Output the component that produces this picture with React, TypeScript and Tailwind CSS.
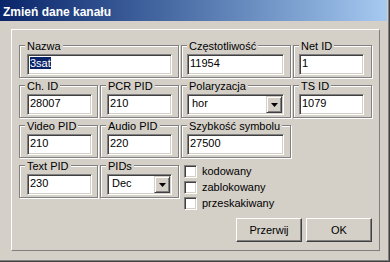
import type { ReactNode } from 'react';

const sunken =
  'border border-t-[#808080] border-l-[#808080] border-b-white border-r-white shadow-[inset_1px_1px_0_#404040,inset_-1px_-1px_0_#D4D0C8]';
const raised =
  'border border-t-[#D4D0C8] border-l-[#D4D0C8] border-b-[#404040] border-r-[#404040] shadow-[inset_1px_1px_0_#fff,inset_-1px_-1px_0_#808080] bg-[#D4D0C8]';

function Group({ label, className = '', children }: { label: string; className?: string; children?: ReactNode }) {
  return (
    <div
      className={`relative h-[33px] border border-[#808080] shadow-[inset_1px_1px_0_#fff,1px_1px_0_#fff] pt-[8px] ${className}`}
    >
      <span className="absolute left-[5px] top-[-6px] bg-[#D4D0C8] px-[2px] leading-[13px] whitespace-nowrap">
        {label}
      </span>
      {children}
    </div>
  );
}

function Field({ value, w = 'w-[65px]', selected }: { value: string; w?: string; selected?: boolean }) {
  return (
    <div className={`h-[21px] ${w} bg-white ${sunken} pl-[2px] pt-[2px] leading-[13px]`}>
      {selected ? <span className="bg-[#0A246A] text-white">{value}</span> : value}
    </div>
  );
}

function Combo({ value, w }: { value: string; w: string }) {
  return (
    <div className={`flex h-[21px] ${w} bg-white ${sunken} p-[1px]`}>
      <span className="flex-1 pl-[3px] pt-[1px] leading-[13px]">{value}</span>
      <div className={`flex h-[17px] w-[16px] items-center justify-center ${raised}`}>
        <svg width="7" height="4" viewBox="0 0 7 4">
          <polygon points="0,0 7,0 3.5,4" fill="#000" />
        </svg>
      </div>
    </div>
  );
}

function Check({ label }: { label: string }) {
  return (
    <div className="flex h-[16px] items-start gap-[5px]">
      <div className={`h-[13px] w-[13px] shrink-0 bg-white ${sunken}`} />
      <span className="leading-[13px]">{label}</span>
    </div>
  );
}

function Button({ label }: { label: string }) {
  return (
    <div
      className="flex h-[24px] w-[66px] items-center justify-center border border-t-white border-l-white border-b-[#404040] border-r-[#404040] shadow-[inset_-1px_-1px_0_#808080] leading-[13px]"
    >
      {label}
    </div>
  );
}

export default function App() {
  return (
    <div className="h-[262px] w-[390px] overflow-hidden border-r border-b border-[#404040] bg-[#D4D0C8] font-['Liberation_Sans',Arial,sans-serif] text-[11px] text-black">
      <div className="flex h-full flex-col border-r border-b border-[#808080]">
        <div className="mr-[1px] h-[21px] shrink-0 bg-linear-to-r from-[#0A246A] to-[#A6CAF0] pl-[3px] pt-[5px] text-[12px] font-bold leading-[14px] text-white">
          Zmień dane kanału
        </div>

        <div className="ml-[11px] mt-[8px] h-[222px] w-[369px] border border-t-white border-l-white border-b-[#808080] border-r-[#808080] pl-[7px] pt-[15px]">
          <div className="grid grid-cols-[79px_79px_110px_79px] items-start gap-x-[2px] gap-y-[7px]">
            <Group label="Nazwa" className="col-span-2 pl-[7px]">
              <Field value="3sat" w="w-[145px]" selected />
            </Group>
            <Group label="Częstotliwość" className="pl-[5px]">
              <Field value="11954" w="w-[97px]" />
            </Group>
            <Group label="Net ID" className="pl-[5px]">
              <Field value="1" />
            </Group>

            <Group label="Ch. ID" className="pl-[7px]">
              <Field value="28007" />
            </Group>
            <Group label="PCR PID" className="pl-[6px]">
              <Field value="210" />
            </Group>
            <Group label="Polaryzacja" className="pl-[5px]">
              <Combo value="hor" w="w-[97px]" />
            </Group>
            <Group label="TS ID" className="pl-[5px]">
              <Field value="1079" />
            </Group>

            <Group label="Video PID" className="pl-[7px]">
              <Field value="210" />
            </Group>
            <Group label="Audio PID" className="pl-[6px]">
              <Field value="220" />
            </Group>
            <Group label="Szybkość symbolu" className="pl-[5px]">
              <Field value="27500" w="w-[97px]" />
            </Group>
            <div />

            <Group label="Text PID" className="pl-[7px]">
              <Field value="230" />
            </Group>
            <Group label="PIDs" className="pl-[6px]">
              <Combo value="Dec" w="w-[65px]" />
            </Group>
            <div className="col-span-2 flex flex-col pl-[3px]">
              <Check label="kodowany" />
              <Check label="zablokowany" />
              <Check label="przeskakiwany" />
            </div>
          </div>

          <div className="mt-[5px] flex w-[353px] justify-end gap-[4px]">
            <Button label="Przerwij" />
            <Button label="OK" />
          </div>
        </div>
      </div>
    </div>
  );
}
